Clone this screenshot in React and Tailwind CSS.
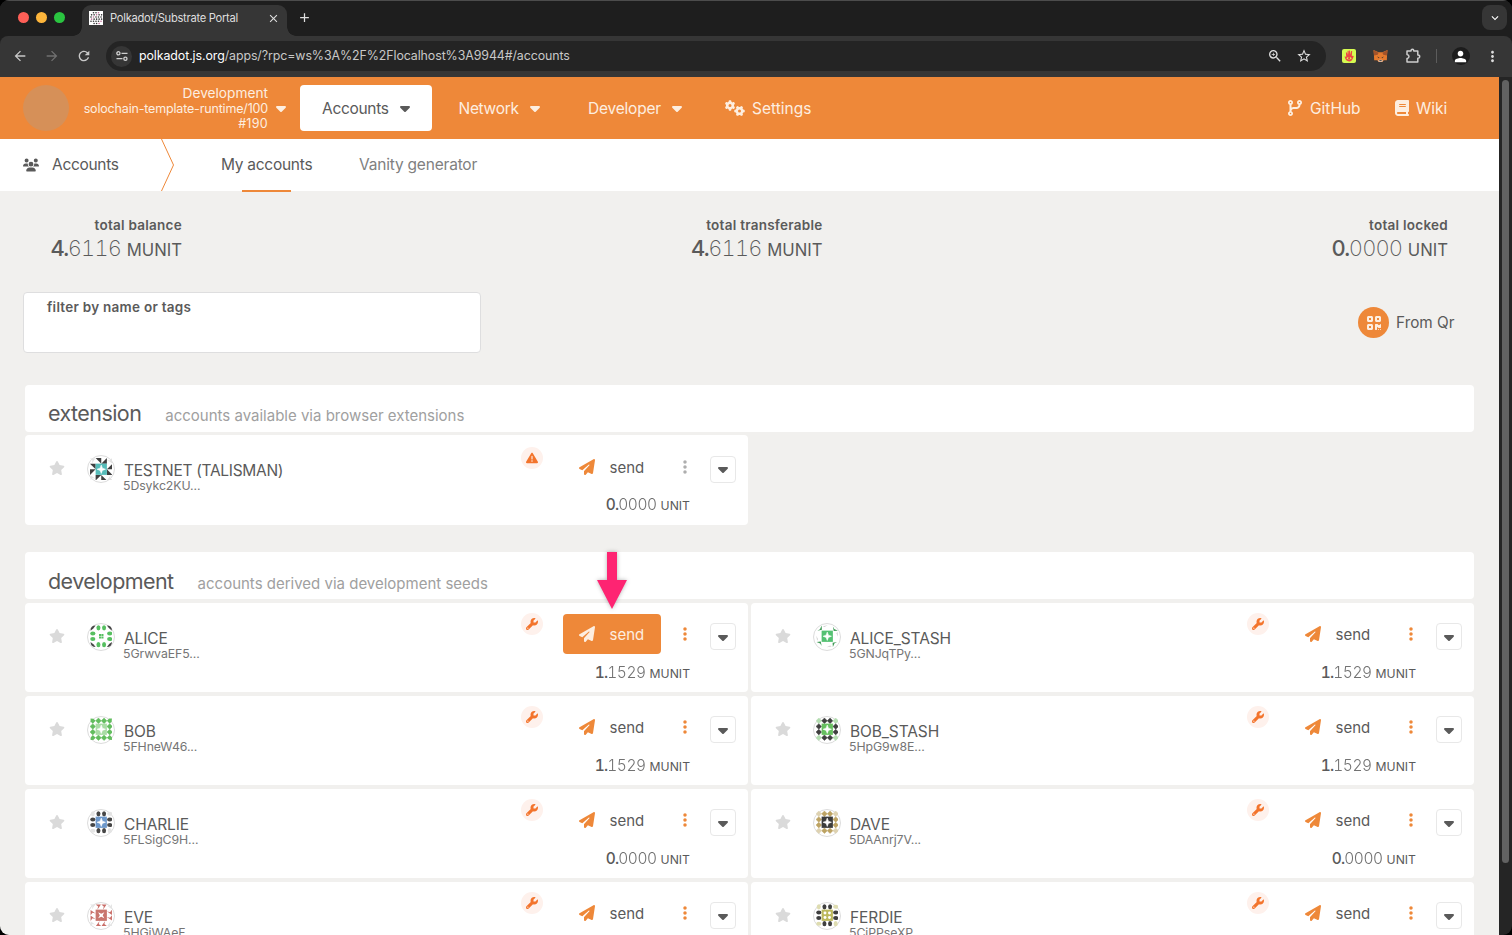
import React from 'react';
import {
  FaBook, FaCaretDown, FaCodeBranch, FaEllipsisVertical, FaGears, FaPaperPlane,
  FaQrcode, FaStar, FaTriangleExclamation, FaUsers, FaWrench,
} from 'react-icons/fa6';
import {
  MdArrowBack, MdArrowForward, MdRefresh, MdStarBorder, MdZoomIn,
  MdMoreVert, MdPerson, MdClose, MdAdd, MdKeyboardArrowDown,
} from 'react-icons/md';

const ACCOUNTS = [
  { name: 'ALICE', addr: '5GrwvaEF5...', int: '1', dec: '1529', unit: 'MUNIT', active: true,
    icon: { side: 'oval', sideColor: '#56bf60', corner: 'wedge', cornerColor: '#464646', center: 'tiny', centerColor: '#56bf60' } },
  { name: 'ALICE_STASH', addr: '5GNJqTPy...', int: '1', dec: '1529', unit: 'MUNIT',
    icon: { side: 'sliver', sideColor: '#3f9a56', corner: 'none', cornerColor: '#e5e5e5', center: 'star', centerColor: '#54c172' } },
  { name: 'BOB', addr: '5FHneW46...', int: '1', dec: '1529', unit: 'MUNIT',
    icon: { side: 'diamond', sideColor: '#62bd5e', corner: 'half', cornerColor: '#62bd5e', center: 'star', centerColor: '#a9dca5' } },
  { name: 'BOB_STASH', addr: '5HpG9w8E...', int: '1', dec: '1529', unit: 'MUNIT',
    icon: { side: 'diamond', sideColor: '#3f3f3f', corner: 'diamond', cornerColor: '#b3ddb0', center: 'star', centerColor: '#66c05f' } },
  { name: 'CHARLIE', addr: '5FLSigC9H...', int: '0', dec: '0000', unit: 'UNIT',
    icon: { side: 'oval', sideColor: '#464646', corner: 'oval', cornerColor: '#e4e4e4', center: 'star', centerColor: '#6d98cb' } },
  { name: 'DAVE', addr: '5DAAnrj7V...', int: '0', dec: '0000', unit: 'UNIT',
    icon: { side: 'diamond', sideColor: '#bda363', corner: 'diamond', cornerColor: '#ded2b1', center: 'star', centerColor: '#3c3c3c' } },
  { name: 'EVE', addr: '5HGjWAeF...', int: '1', dec: '1529', unit: 'MUNIT',
    icon: { side: 'tri', sideColor: '#c96e68', corner: 'tri', cornerColor: '#e4e4e4', center: 'cross', centerColor: '#c9766e' } },
  { name: 'FERDIE', addr: '5CiPPseXP...', int: '1', dec: '1529', unit: 'MUNIT',
    icon: { side: 'oval', sideColor: '#3f3f3f', corner: 'oval', cornerColor: '#dedcb0', center: 'dots', centerColor: '#bdb95c' } },
];

const TESTNET = {
  name: 'TESTNET (TALISMAN)', addr: '5Dsykc2KU...', int: '0', dec: '0000', unit: 'UNIT', warn: true,
  icon: { side: 'pinwheel', sideColor: '#3f3f3f', corner: 'tri', cornerColor: '#e2e2e2', center: 'star', centerColor: '#56bcb9' },
};

/* One unit cell of the identicon, drawn around its own 0..1 box. */
function Cell({ kind, color, second }) {
  if (kind === 'oval') return <ellipse cx=".5" cy=".5" rx=".36" ry=".46" fill={color} />;
  if (kind === 'diamond') return <path d="M.5 0 1 .5 .5 1 0 .5z" fill={color} stroke={color} strokeWidth=".08" />;
  if (kind === 'tri') return <path d="M0 .1H.95L.3 1 .45.45z" fill={color} />;
  if (kind === 'pinwheel') return <path d={second ? 'M1 0V1H0z' : 'M0 0H1V1z'} fill={color} />;
  if (kind === 'wedge') return <path d="M.1 1Q.1.1 1 .1L.55.65z" fill={color} />;
  if (kind === 'half') return <path d="M.1.1 .6.15 1 .5 .5 1 .1.6z" fill={color} />;
  return null;
}

function Identicon({ icon }) {
  const quarter = (
    <>
      <g><Cell kind={icon.corner} color={icon.cornerColor} /></g>
      {icon.side === 'sliver' ? (
        <>
          <path d="M1 .1 1.05.85 .25 1 .7.75z" fill={icon.sideColor} />
          <path d="M1.2.2 2.1.05 1.5.35z" fill="#cfcfcf" />
        </>
      ) : (
        <>
          <g transform="translate(1 0)"><Cell kind={icon.side} color={icon.sideColor} /></g>
          <g transform="translate(2 0)"><Cell kind={icon.side} color={icon.sideColor} second /></g>
        </>
      )}
    </>
  );
  return (
    <div className="mt-5 flex size-7 shrink-0 items-center justify-center rounded-full border border-[#dcdcdc] bg-white">
      <svg viewBox="0 0 4 4" className="size-[22.5px]">
        {[0, 90, 180, 270].map((r) => (
          <g key={r} transform={`rotate(${r} 2 2)`}>{quarter}</g>
        ))}
        {icon.center !== 'tiny' && <rect x="1" y="1" width="2" height="2" fill={icon.centerColor} />}
        {icon.center === 'star' && <path d="M2 1.25 2.2 1.8 2.75 2 2.2 2.2 2 2.75 1.8 2.2 1.25 2 1.8 1.8z" fill="#fff" stroke="#fff" strokeWidth=".1" />}
        {icon.center === 'cross' && <path d="M1.45 1.45 2 1.75 2.55 1.45 2.25 2 2.55 2.55 2 2.25 1.45 2.55 1.75 2z" fill="#fff" />}
        {icon.center === 'tiny' && <path d="M1.6 1.6h.37v.37H1.6zM2.03 1.6h.37v.37h-.37zM1.6 2.03h.37v.37H1.6zM2.03 2.03h.37v.37h-.37z" fill={icon.centerColor} />}
        {icon.center === 'dots' && [1.6, 2.4].map((x) => [1.6, 2.4].map((y) => (
          <circle key={`${x}${y}`} cx={x} cy={y} r=".26" fill="#fff" />
        )))}
      </svg>
    </div>
  );
}

function AccountCard({ account }) {
  const { name, addr, warn, active, icon } = account;
  return (
    <div className="flex h-[89.5px] items-start rounded bg-white">
      <FaStar className="mt-[25px] ml-6 size-4 shrink-0 text-[#dadada]" />
      <div className="ml-[22px]"><Identicon icon={icon} /></div>
      <div className={`ml-[9px] w-[396.5px] whitespace-nowrap ${warn ? 'mt-[27.5px]' : 'mt-[28px]'}`}>
        <div className={`text-[15.5px] leading-4 ${warn ? 'tracking-[-0.3px]' : 'tracking-[-0.1px]'}`}>{name}</div>
        <div className="-ml-px text-[12.3px] leading-[14px] tracking-[-0.08px] text-[#757575]">{addr}</div>
      </div>
      <div className={`flex size-[22px] shrink-0 items-center justify-center rounded-full bg-[#fef1ec] text-[#f3742c] ${warn ? 'mt-3' : 'mt-[10.5px]'}`}>
        {warn ? <FaTriangleExclamation className="size-3" /> : <FaWrench className="size-3" />}
      </div>
      <div className="ml-5 w-[127.5px] shrink-0">
        <div className={`flex items-center ${warn ? 'mt-3' : 'mt-[11.5px]'}`}>
          <div className={`flex h-10 w-[98px] shrink-0 items-center rounded pl-[16.5px] text-[15px] ${active ? 'bg-[#ee8839] text-[#fdeee0]' : ''}`}>
            <FaPaperPlane className={`size-4 ${active ? '' : 'text-[#ee8839]'}`} />
            <span className="mt-[1.5px] ml-[14.5px]">send</span>
          </div>
          <FaEllipsisVertical className={`ml-4 size-4 shrink-0 ${warn ? 'text-[#aeaeae]' : 'text-[#ee8839]'}`} />
        </div>
        <div className={`text-right text-[15.5px] leading-5 whitespace-nowrap ${warn ? 'mt-[7.5px]' : 'mt-[8.5px]'}`}>
          <span className="font-medium tracking-[-0.9px] tabular-nums">{account.int}.</span>
          <span className="font-light tracking-[-0.45px] tabular-nums opacity-85">{account.dec}</span>
          <span className="ml-1 text-[12.2px]">{account.unit}</span>
        </div>
      </div>
      <div className="mt-[20.5px] ml-[19.5px] flex h-[27px] w-[26px] shrink-0 items-center justify-center rounded border border-[#e8e8e8]">
        <FaCaretDown className="size-4" />
      </div>
    </div>
  );
}

function SectionHeader({ title, note }) {
  return (
    <div className="flex h-[47px] items-baseline rounded bg-white pt-[12.5px] pl-[23px]">
      <h2 className="text-[21.5px] leading-8 tracking-[-0.57px]">{title}</h2>
      <span className="ml-6 text-[15px] text-[#a0a0a0]">{note}</span>
    </div>
  );
}

function Total({ label, int, dec, unit }) {
  return (
    <div className="text-right whitespace-nowrap">
      <div className="text-[13.5px] leading-5 font-semibold tracking-[0.26px]">{label}</div>
      <div className="text-[22px] leading-[26px]">
        <span className="font-medium tracking-[-1.5px] tabular-nums">{int}.</span>
        <span className="font-extralight tracking-[-0.85px] tabular-nums">{dec}</span>
        <span className="ml-[5.5px] text-[16.7px]">{unit}</span>
      </div>
    </div>
  );
}

function Favicon() {
  const dots = [];
  for (let y = 0; y < 6; y++) {
    for (let x = 0; x < 5; x++) {
      if ((y === 0 || y === 5) && (x === 0 || x === 4)) continue;
      dots.push(<circle key={`${x}-${y}`} cx={2 + x * 2.5 + (y % 2 ? 0.6 : 0)} cy={1.7 + y * 2.15} r=".8" fill={(x + y) % 5 === 3 ? '#c06a94' : '#333'} />);
    }
  }
  return <svg viewBox="0 0 14 14" className="size-[14px] bg-white">{dots}</svg>;
}

function BrowserChrome() {
  return (
    <header className="bg-[#1e1e1e] text-[#dedede]">
      <div className="flex h-9 items-start border-t border-[#4c4c4c]">
        <div className="ml-[18px] flex h-[33px] items-center gap-[7px]">
          <span className="size-[11px] rounded-full bg-[#fe5f57]" />
          <span className="size-[11px] rounded-full bg-[#fdb53b]" />
          <span className="size-[11px] rounded-full bg-[#2ac440]" />
        </div>
        <div className="ml-[8px] flex h-[35px] items-end">
          <span className="size-[9px] bg-[radial-gradient(circle_at_0_0,#1e1e1e_8.5px,#363636_9px)]" />
          <div className="mt-1 flex h-[31px] w-[205px] items-center self-end rounded-t-[9px] bg-[#363636] pb-[5px] pl-[7px]">
            <Favicon />
            <span className="ml-[7px] w-[128px] text-[11.2px] tracking-[-0.28px] whitespace-nowrap">Polkadot/Substrate Portal</span>
            <MdClose className="ml-[28.5px] size-[13px]" />
          </div>
          <span className="size-[9px] bg-[radial-gradient(circle_at_100%_0,#1e1e1e_8.5px,#363636_9px)]" />
        </div>
        <MdAdd className="mt-[9px] ml-[1px] size-[15px]" />
        <div className="mt-1 mr-[5px] ml-auto flex size-[25px] items-center justify-center rounded-lg bg-[#363636]">
          <MdKeyboardArrowDown className="size-[14px] text-white" />
        </div>
      </div>
      <div className="flex h-[41px] items-center rounded-t-lg bg-[#363636] pr-[11px] pb-px pl-[11.5px]">
        <MdArrowBack className="size-4 text-[#c8c8c8]" />
        <MdArrowForward className="ml-4 size-4 text-[#707070]" />
        <MdRefresh className="ml-4 size-4 text-[#c8c8c8]" />
        <div className="ml-[14.5px] flex h-[30px] w-[1220px] shrink-0 items-center rounded-full bg-[#242424] pr-[14px] pl-[5px]">
          <span className="flex size-[21px] items-center justify-center rounded-full bg-[#363636]">
            <svg viewBox="0 0 12 10" className="h-[10px] w-3" fill="none" stroke="#d0d0d0" strokeWidth="1.3">
              <circle cx="2.4" cy="2.3" r="1.6" /><path d="M5.5 2.3h6M.5 7.7h6" /><circle cx="9.4" cy="7.7" r="1.6" />
            </svg>
          </span>
          <span className="mt-px ml-[7px] text-[12.4px] tracking-[-0.09px] text-[#c8c8c8]"><span className="text-white">polkadot.js.org</span>/apps/?rpc=ws%3A%2F%2Flocalhost%3A9944#/accounts</span>
          <MdZoomIn className="ml-auto size-4" />
          <MdStarBorder className="ml-[13px] size-4" />
        </div>
        <svg viewBox="0 0 14 14" className="ml-[15.5px] size-[14px] shrink-0">
          <rect width="14" height="14" rx="2" fill="#d5fb51" />
          <path d="M2.5 7.6Q4 7 4.2 8L3.9 3.6H5L5.6 6V1.8H6.7V5.8L7.2 1.4H8.1L8.2 5.8L9.2 2H10.2L9.8 7Q10.5 6.5 11.7 7Q10.5 12.5 7.1 12.5Q3.8 12.5 2.5 7.6Z" fill="#ee4545" />
          <path d="M4.3 9.2Q7 6.7 9.9 9.2Q7 11.9 4.3 9.2Z" fill="#d5fb51" /><circle cx="7.1" cy="9.2" r="1.1" fill="#ee4545" />
        </svg>
        <svg viewBox="0 0 16 15" className="ml-[17.5px] h-[14px] w-[15px] shrink-0">
          <path d="M.5 1 6 3.5H10L15.5 1 15 7 14.8 12 11.5 12 10 14H6L4.5 12 1.2 12 1 7z" fill="#e57a2e" />
          <path d="M.5 1 6 4 5 6.2 1.2 7zM15.5 1 10 4 11 6.2 14.8 7z" fill="#a4532a" />
          <path d="M4.3 8 6.8 9 6.3 10zM11.7 8 9.2 9 9.7 10z" fill="#2c2c2c" />
          <path d="M5.6 12 6.8 11.4H9.2L10.4 12 10 13.7H6z" fill="#d9c9bd" /><path d="M6.8 12h2.4v.9H6.8z" fill="#292929" />
        </svg>
        <svg viewBox="0 0 16 16" className="ml-[17px] size-4 shrink-0" fill="none" stroke="#cdcdcd" strokeWidth="1.5" strokeLinejoin="round">
          <path d="M2 3H6Q6 1.3 7.4 1.3T8.8 3H12.8V7Q14.7 7 14.7 8.6T12.8 10.2V14H2V10.6Q4 10.2 4 8.5T2 6.4z" />
        </svg>
        <span className="ml-[15px] h-[14px] w-px bg-[#5c5c5c]" />
        <span className="ml-[14.5px] flex size-[18px] shrink-0 items-center justify-center rounded-full bg-[#1c1c1c]">
          <MdPerson className="size-[17px] text-white" />
        </span>
        <MdMoreVert className="ml-auto size-[17px] shrink-0" />
      </div>
    </header>
  );
}

export default function App() {
  return (
    <div className="h-[935px] w-[1512px] overflow-hidden bg-black font-['Inter',sans-serif] text-[#5a5a5a]">
      <div className="flex h-full flex-col overflow-hidden rounded-[9px] bg-[#252525]">
        <BrowserChrome />
        <div className="flex h-[858px]">
          <main className="h-full w-[1499px] overflow-hidden bg-[#f1f0ee]">
            <nav className="flex h-[62px] items-center bg-[#ee8839] text-[15.5px] text-[#fdeee0]">
              <span className="ml-[23px] size-[46px] rounded-full bg-[#d69058]" />
              <div className="mt-px w-[199px] text-right text-[12.5px] leading-[15px] tracking-[-0.17px] whitespace-nowrap">
                <div className="text-[13.7px] tracking-normal">Development</div>
                <div>solochain-template-runtime/100</div>
                <div className="tracking-[0.3px]">#190</div>
              </div>
              <FaCaretDown className="ml-[4.5px] size-4" />
              <div className="ml-[11.5px] flex h-[46px] w-[132px] items-center rounded bg-white pl-[22px] text-[#5a5a5a]">
                <span className="mt-px w-[67px] tracking-[-0.3px]">Accounts</span><FaCaretDown className="ml-2 size-4" />
              </div>
              <span className="mt-px ml-[26.5px] w-[60px] tracking-[-0.3px]">Network</span><FaCaretDown className="ml-2 size-4" />
              <span className="mt-px ml-[45.5px] w-[73px] tracking-[-0.2px]">Developer</span><FaCaretDown className="ml-2 size-4" />
              <FaGears className="ml-10 h-4 w-5" /><span className="mt-px ml-[7px]">Settings</span>
              <FaCodeBranch className="ml-auto size-4" /><span className="mt-px ml-[7px] w-[50px]">GitHub</span>
              <FaBook className="ml-[34px] size-4" /><span className="mt-px mr-[52px] ml-[6px] w-[31px]">Wiki</span>
            </nav>
            <div className="flex h-[52px] items-center bg-white pl-[23px] text-[15.5px]">
              <FaUsers className="size-4" />
              <span className="ml-[13px] w-[67px] tracking-[-0.3px]">Accounts</span>
              <svg viewBox="0 0 14 52" className="ml-[41.5px] h-[52px] w-[14px]" fill="none" stroke="#ee8839"><path d="M.5 0 12.5 26 .5 52" /></svg>
              <div className="relative ml-[46.5px] flex h-full w-[92px] items-center tracking-[-0.27px] whitespace-nowrap">
                My accounts
                <span className="absolute -bottom-px left-[21px] h-[2px] w-[49px] bg-[#ee8839]" />
              </div>
              <span className="ml-[46px] tracking-[-0.2px] text-[#808080]">Vanity generator</span>
            </div>

            <div className="mt-[24px] flex justify-between pr-[51px] pl-[50.5px]">
              <Total label="total balance" int="4" dec="6116" unit="MUNIT" />
              <Total label="total transferable" int="4" dec="6116" unit="MUNIT" />
              <Total label="total locked" int="0" dec="0000" unit="UNIT" />
            </div>

            <div className="mt-[29px] flex items-center justify-between pr-[44.5px] pl-[23px]">
              <div className="h-[61px] w-[458px] rounded border border-[#dededf] bg-white pt-1 pl-[23px] text-[13.5px] leading-5 font-semibold tracking-[0.26px]">
                filter by name or tags
              </div>
              <div className="flex items-center text-[15.3px]">
                <span className="flex size-[31px] items-center justify-center rounded-full bg-[#ee8839] text-[#fdeee0]"><FaQrcode className="size-4" /></span>
                <span className="mt-px ml-[7px]">From Qr</span>
              </div>
            </div>

            <section className="mt-[31.5px] ml-[25px] w-[1448.5px]">
              <SectionHeader title="extension" note="accounts available via browser extensions" />
              <div className="mt-[3.5px] grid grid-cols-2 gap-[3.5px]">
                <AccountCard account={TESTNET} />
              </div>
            </section>

            <section className="mt-[27.5px] ml-[25px] w-[1448.5px]">
              <SectionHeader title="development" note="accounts derived via development seeds" />
              <div className="mt-[3.5px] grid grid-cols-2 gap-[3.5px]">
                {ACCOUNTS.map((a) => <AccountCard key={a.name} account={a} />)}
              </div>
            </section>
          </main>
          <div className="flex w-[13px] justify-center pt-[3px]">
            <span className="h-[783px] w-[7px] rounded-full bg-[#626262]" />
          </div>
        </div>
      </div>

      <svg viewBox="0 0 32 60" className="absolute top-[551px] left-[596px] h-[60px] w-8 drop-shadow-[0_0_2px_rgba(0,0,0,0.3)]">
        <path d="M11 1H21V29H31L16 58 1 29H11z" fill="#fe2472" />
      </svg>
    </div>
  );
}
